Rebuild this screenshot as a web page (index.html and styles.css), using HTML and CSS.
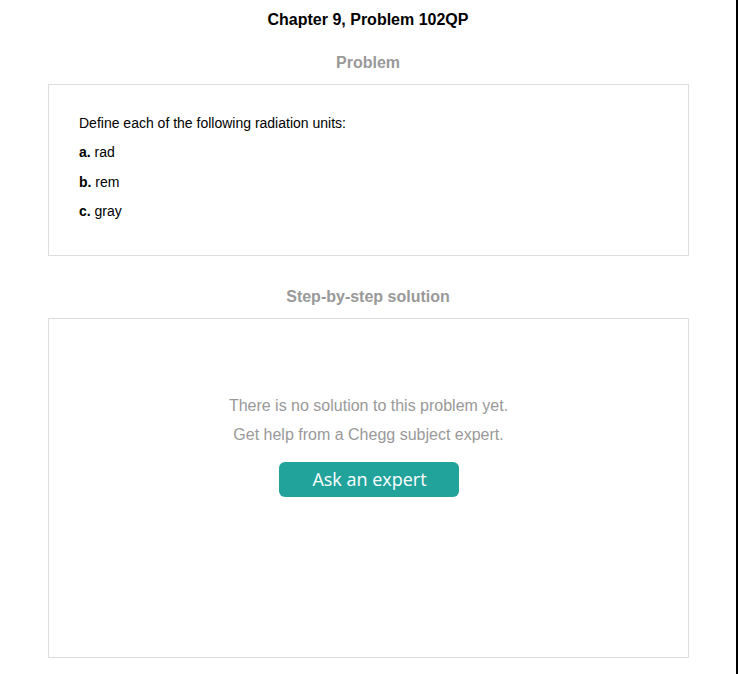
FILE: index.html
```html
<!DOCTYPE html>
<html>
<head>
<meta charset="utf-8">
<link rel="stylesheet" href="styles.css">
</head>
<body>
<div class="page">
  <h1 class="title">Chapter 9, Problem 102QP</h1>
  <h2 class="section-title">Problem</h2>
  <div class="card problem">
    <p>Define each of the following radiation units:</p>
    <p><b>a.</b> rad</p>
    <p><b>b.</b> rem</p>
    <p><b>c.</b> gray</p>
  </div>
  <h2 class="section-title step">Step-by-step solution</h2>
  <div class="card solution">
    <p class="msg">There is no solution to this problem yet.</p>
    <p class="msg">Get help from a Chegg subject expert.</p>
    <button class="ask">Ask an expert</button>
  </div>
</div>
</body>
</html>
```
FILE: styles.css
```css
html, body {
  margin: 0;
  padding: 0;
  background: #fff;
}
.page {
  width: 736px;
  height: 674px;
  border-right: 2px solid #000;
  font-family: "Liberation Sans", Arial, sans-serif;
  display: flex;
  flex-direction: column;
  align-items: center;
  box-sizing: content-box;
}
.title {
  margin: 11px 0 0;
  font-size: 16px;
  line-height: 18px;
  font-weight: bold;
  color: #000;
}
.section-title {
  margin: 25px 0 0;
  font-size: 16px;
  line-height: 18px;
  font-weight: bold;
  color: #999;
}
.section-title.step {
  margin-top: 32px;
}
.card {
  box-sizing: border-box;
  width: 641px;
  border: 1px solid #ddd;
  margin-top: 12px;
  margin-left: 1px;
}
.problem {
  height: 172px;
  padding: 30px 30px 0;
  font-size: 14px;
  color: #000;
}
.problem p {
  margin: 0 0 13.4px;
  line-height: 16px;
}
.solution {
  height: 340px;
  display: flex;
  flex-direction: column;
  align-items: center;
  padding-top: 78px;
}
.msg {
  margin: 0 0 11px;
  font-size: 16px;
  line-height: 18px;
  color: #999;
}
.ask {
  margin-top: 7px;
  width: 180px;
  height: 35px;
  border: none;
  border-radius: 6px;
  background: #21a39b;
  color: #fff;
  font-family: "Open Sans", "DejaVu Sans", sans-serif;
  font-size: 18px;
  line-height: 35px;
  padding: 0 0 0 1px;
  margin-left: 1px;
}
```
